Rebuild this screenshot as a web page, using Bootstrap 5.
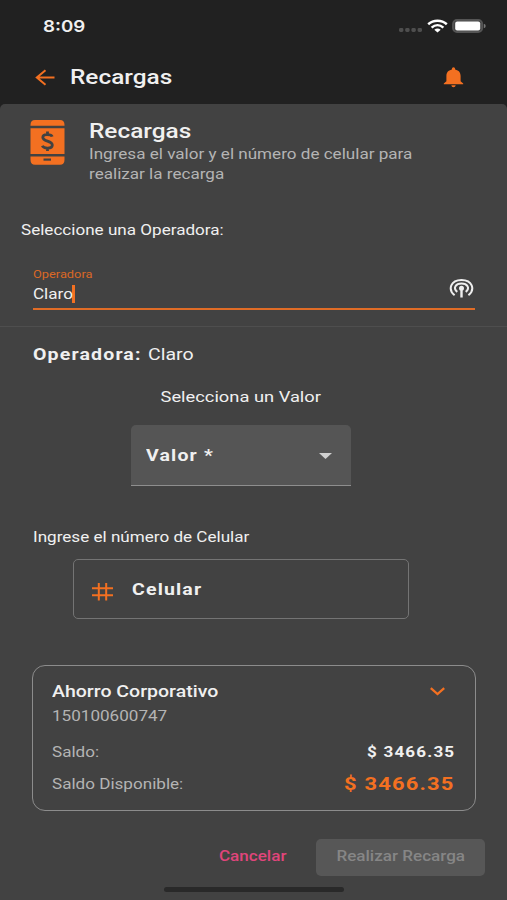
<!DOCTYPE html>
<html lang="es">
<head>
<meta charset="utf-8">
<meta name="viewport" content="width=device-width, initial-scale=1">
<title>Recargas</title>
<link rel="stylesheet" href="https://cdn.jsdelivr.net/npm/bootstrap@5.3.0/dist/css/bootstrap.min.css">
<style>
  body { background: #212121; color: #f0f0f0; font-family: Roboto, "Liberation Sans", sans-serif; height: 900px; overflow: hidden; font-size: 14px; line-height: 20px; }
  svg { display: block; flex: none; }
  /* wide lettering, anchored left, right or centre */
  .wide { display: inline-block; white-space: nowrap; transform: scaleX(1.22); transform-origin: 0 50%; }
  .wide-end { transform-origin: 100% 50%; }
  .wide-mid { transform-origin: 50% 50%; }
  .orange { color: #f37021; }
  .muted { color: #b4b4b4; }
  .medium { font-weight: 500; }
  .spaced { font-weight: 700; letter-spacing: .95px; }
  .amount { font-weight: 700; letter-spacing: .95px; }
  .f10 { font-size: 10.5px; } .f15 { font-size: 15px; } .f16 { font-size: 16px; } .f18 { font-size: 18px; } .f20 { font-size: 20px; }

  .statusbar { height: 52px; padding: 0 21px 0 43px; }
  .clock { font-family: Inter, Roboto, sans-serif; font-weight: 600; font-size: 16px; transform: scaleX(1.17); }
  .appbar { height: 52px; padding: 0 43px 2px 35px; }
  .sheet { background: #424242; height: 796px; border-radius: 5px 5px 0 0; }
  .intro { padding: 16px 0 0 30px; height: 116px; }
  .operator-field { margin: 0 32px 0 33px; height: 52px; border-bottom: 2px solid #e06c26; padding-top: 7px; }
  .caret { width: 3px; height: 18px; background: #f37021; margin-left: 6px; }
  .divider { height: 1px; background: #4e4e4e; margin-top: 16px; }
  .amount-select { width: 220px; height: 61px; margin: 18px 0 0 131px; background: #555; border-bottom: 1.5px solid #8e8e8e; border-radius: 5px 5px 0 0; padding: 1px 19px 0 15px; }
  .phone-input { width: 336px; height: 60px; margin: 12px 0 0 73px; border: 1.5px solid #747474; border-radius: 5px; padding: 2px 0 0 18px; }
  .account { width: 444px; height: 146px; margin: 46px 0 0 32px; border: 1px solid #8c8c8c; border-radius: 13px; padding: 16px 20px 0 19px; }
  .actions { height: 37px; margin: 28px 22px 0 0; }
  .cancel { color: #e0457b; background: none; border: 0; }
  .confirm { width: 169px; height: 37px; background: #575757; color: #868686; border: 0; border-radius: 5px; }
  .cancel .wide, .confirm .wide { margin-bottom: 3px; }
  .home-bar { width: 180px; height: 5px; margin: 11px 0 0 164px; background: #292929; border-radius: 3px; }
</style>
</head>
<body>
<header>
  <div class="statusbar d-flex align-items-center justify-content-between">
    <span class="wide clock">8:09</span>
    <div class="d-flex align-items-center">
      <svg width="24" height="14" viewBox="0 0 24 14" fill="#4e4e4e"><rect x="0" y="9" width="4.4" height="4" rx="1.4"/><rect x="6.2" y="9" width="4.4" height="4" rx="1.4"/><rect x="12.4" y="9" width="4.4" height="4" rx="1.4"/><rect x="18.6" y="9" width="4.4" height="4" rx="1.4"/></svg>
      <svg class="ms-1" width="21" height="14" viewBox="0 0 21 14" fill="none" stroke="#fff" stroke-width="2.5"><path d="M1.2 5.2C6.4.5 14.600.5 19.800 5.2"/><path d="M4.600 8.600C8.200 5.400 12.800 5.400 16.400 8.600"/><path d="M7.300 10.700Q10.500 8.200 13.700 10.700L10.500 13.400Z" fill="#fff" stroke="none"/></svg>
      <svg class="ms-1" width="34" height="14" viewBox="0 0 34 14"><rect x="1" y="1" width="29.200" height="12" rx="4" fill="#444" stroke="#555" stroke-width="1.800"/><rect x="3.200" y="2.600" width="25" height="8.800" rx="2" fill="#fff"/><path d="M31.800 4.800q1.900 .4 1.900 2.200t-1.900 2.200z" fill="#777"/></svg>
    </div>
  </div>
  <div class="appbar d-flex align-items-center">
    <svg width="20" height="17" viewBox="0 0 20 17" fill="none" stroke="#f37021" stroke-width="2"><path d="M19.500 8.500H2M10.500 1.300L1.800 8.500L10.500 15.700"/></svg>
    <h1 class="wide medium f20 m-0" style="margin-left:14.5px!important">Recargas</h1>
    <svg class="ms-auto" width="21" height="21" viewBox="0 0 21 21" fill="#f37021"><path d="M8.900 2.500V1.800Q8.900.3 10.500.3T12.100 1.800V2.500C16 3.300 17.600 5.800 17.600 9V14.300L20.200 16.500V17.300H.8V16.500L3.400 14.300V9C3.400 5.800 5 3.300 8.900 2.500ZM8.300 18.300H12.700Q12.400 20.200 10.500 20.200T8.300 18.300Z"/></svg>
  </div>
</header>
<main class="sheet">
  <section class="intro d-flex">
    <svg width="35" height="45" viewBox="0 0 35 45" fill="#f37021"><path d="M5 0H30Q34.500 0 34.500 5V5.800H.5V5Q.5 0 5 0ZM.5 8.200H34.500V34H.5ZM.5 36.400H34.500V39.800Q34.500 44.800 30 44.800H5Q.5 44.800 .5 39.800Z"/><path d="M13.500 39.600H21" stroke="#424242" stroke-width="2.200"/><path d="M22.200 16.600C21.500 14.300 13 13.200 12.800 17.200C12.700 21.600 22.300 20.600 22.300 25.100C22.200 29 13.600 28.800 12.300 25.800M17.500 11.600V15M17.500 27.500V31" fill="none" stroke="#424242" stroke-width="2.800"/></svg>
    <div class="ms-4">
      <h2 class="wide medium f20 m-0 d-block" style="line-height:22px">Recargas</h2>
      <p class="wide muted m-0" style="padding-top:2px">Ingresa el valor y el número de celular para<br>realizar la recarga</p>
    </div>
  </section>
  <label class="d-block" for="op" style="padding-left:20.5px;height:38px"><span class="wide">Seleccione una Operadora:</span></label>
  <div class="operator-field d-flex justify-content-between" id="op">
    <div>
      <div class="orange f10" style="opacity:.85;height:19px"><span class="wide">Operadora</span></div>
      <div class="d-flex align-items-center"><span class="wide">Claro</span><i class="caret"></i></div>
    </div>
    <svg width="25" height="22" viewBox="0 0 25 22" fill="none" stroke="#eee" stroke-width="2" style="margin:13px 1px 0 0"><path d="M5.600 17.200C-1.500 11.500 1.700 2 12.500 2S26.500 11.500 19.400 17.200"/><path d="M8.300 13.900C3.500 10 6.800 5.600 12.500 5.600S21.500 10 16.700 13.900"/><circle cx="12.500" cy="10.300" r="1.500" fill="#eee"/><path d="M12.500 10V19.500" stroke-width="2.400"/></svg>
  </div>
  <div class="divider"></div>
  <section>
    <div class="d-flex f16" style="padding:18px 0 0 33px"><span class="wide spaced">Operadora:</span><span class="wide" style="margin-left:26px">Claro</span></div>
    <div class="text-center f15" style="width:482px;padding-top:22px"><span class="wide wide-mid">Selecciona un Valor</span></div>
    <div class="amount-select d-flex align-items-center justify-content-between">
      <span class="wide spaced f16">Valor *</span>
      <svg width="13" height="6" viewBox="0 0 13 6" fill="#d0d0d0"><path d="M0 0H13L6.500 6Z"/></svg>
    </div>
    <div style="padding:41px 0 0 33px"><span class="wide">Ingrese el número de Celular</span></div>
    <div class="phone-input d-flex align-items-center">
      <svg width="21" height="18" viewBox="0 0 21 18" fill="none" stroke="#f37021" stroke-width="2" style="margin-top:3px"><path d="M0 5.200H21M0 12.200H21M6.800 0V17.500M14.200 0V17.500"/></svg>
      <span class="wide spaced f16" style="margin-left:19px">Celular</span>
    </div>
  </section>
  <section class="account">
    <div class="d-flex justify-content-between align-items-center"><span class="wide medium f16">Ahorro Corporativo</span>
      <svg width="15" height="9" viewBox="0 0 15 9" fill="none" stroke="#f37021" stroke-width="2.300" style="margin:0 10px 1px 0"><path d="M.8 1.200L7.500 7L14.200 1.200"/></svg></div>
    <div class="muted" style="margin-top:4px"><span class="wide">150100600747</span></div>
    <div class="d-flex justify-content-between" style="margin-top:16px"><span class="wide muted">Saldo:</span><span class="wide wide-end amount">$ 3466.35</span></div>
    <div class="d-flex justify-content-between" style="margin-top:12px"><span class="wide muted">Saldo Disponible:</span><span class="wide wide-end amount f18 orange">$ 3466.35</span></div>
  </section>
  <div class="actions d-flex align-items-center justify-content-end">
    <button class="cancel p-0 medium" style="margin-right:36px"><span class="wide wide-mid">Cancelar</span></button>
    <button class="confirm p-0 medium"><span class="wide wide-mid">Realizar Recarga</span></button>
  </div>
  <div class="home-bar"></div>
</main>
<script src="https://cdn.jsdelivr.net/npm/bootstrap@5.3.0/dist/js/bootstrap.bundle.min.js"></script>
</body>
</html>
